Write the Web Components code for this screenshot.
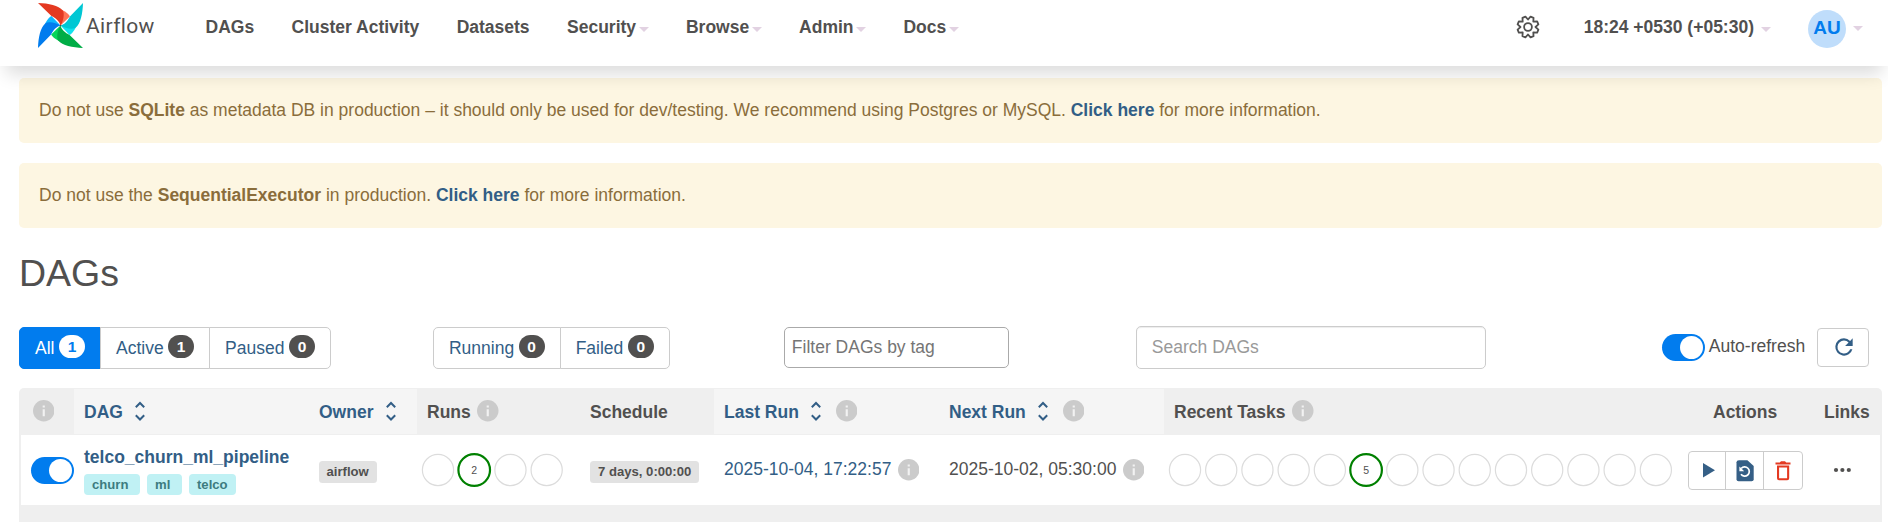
<!DOCTYPE html>
<html lang="en">
<head>
<meta charset="utf-8">
<title>DAGs - Airflow</title>
<style>
html,body{margin:0;padding:0;background:#fff}
body{font:17.5px/25px "Liberation Sans",Arial,sans-serif;color:#51504f;height:522px;overflow:hidden;--link:#325e86}
</style>
</head>
<body>
<airflow-app></airflow-app>
<script>
const define=(name,html)=>customElements.define(name,class extends HTMLElement{
  connectedCallback(){
    if(this.shadowRoot)return;
    const t=document.createElement('template');
    t.innerHTML=typeof html==='function'?html(this):html;
    this.attachShadow({mode:'open'}).append(t.content.cloneNode(true));
  }
});

define('airflow-logo',()=>{
  const blades=[['#e43921','#ff7557',0],['#00c7d4','#11e1ee',90],['#00ad46','#04d659',180],['#017cee','#0cb6ff',270]];
  const light=blades.map(([,l,a])=>`<path transform="rotate(${a})" fill="${l}" d="M5-46C17-40 25-33 28-27L0 0Z"/>`).join('');
  const dark=blades.map(([d,,a])=>`<path transform="rotate(${a})" fill="${d}" d="M-67-67C-35-66-6-60 7-45C13-34 8-12 0 0C-3-12-14-22-27-28Z"/>`).join('');
  return `<style>:host{display:flex;width:118px;height:46px}svg{display:block;flex:none}span{font:400 21px/24px Roboto,sans-serif;margin:10.5px 0 0 3px;white-space:nowrap;letter-spacing:.35px}</style>
  <svg width="45" height="45" viewBox="-67 -67 134 134">${light}${dark}<circle r="2" fill="#51504f"/></svg><span>Airflow</span>`;
});

define('caret-down',`<style>:host{display:block;width:0;height:0;border:5px solid transparent;border-top-color:#e2d2e2;border-bottom:0;margin:4px 0 0 2.5px}</style>`);

define('nav-item',el=>`<style>:host{display:flex;align-items:center;font-weight:700;white-space:nowrap;height:25px}</style><slot></slot>${el.hasAttribute('menu')?'<caret-down></caret-down>':''}`);

define('gear-icon',()=>{
  let p='';
  for(let i=0;i<8;i++){
    const a=(i*45+22.5)*Math.PI/180;
    [[-.3927,7.5],[-.15,10.7],[.15,10.7]].forEach(([o,r],k)=>{
      p+=(i||k?'L':'M')+(Math.sin(a+o)*r).toFixed(2)+' '+(-Math.cos(a+o)*r).toFixed(2);
    });
  }
  return `<style>:host,svg{display:block}</style><svg width="24" height="24" viewBox="-12 -12 24 24" fill="none" stroke="#51504f" stroke-width="1.8" stroke-linejoin="round"><path d="${p}Z"/><circle r="3.9"/></svg>`;
});

define('nav-bar',`<style>
:host{display:flex;box-sizing:border-box;height:66px;background:#fff;box-shadow:0 14px 18px -6px rgba(0,0,0,.14);position:relative;padding:3px 25px 0 38px}
.links{display:flex;gap:37.4px;margin:11.5px 0 0 49.5px;align-items:flex-start}
.right{display:flex;margin-left:auto;align-items:flex-start}
gear-icon{margin:12px 43.5px 0 0}
.time{margin-top:11.5px}
.time caret-down{margin-left:7px}
.user{display:flex;margin-left:37px;align-items:center;height:38px;margin-top:6.5px}
.av{width:38px;height:38px;border-radius:50%;background:#bfddfb;color:#017cee;font:700 19px/36px "Liberation Sans",Arial,sans-serif;text-align:center}
.user caret-down{margin:0 0 0 7px}
</style>
<airflow-logo></airflow-logo>
<div class="links"><nav-item>DAGs</nav-item><nav-item>Cluster Activity</nav-item><nav-item>Datasets</nav-item><nav-item menu>Security</nav-item><nav-item menu>Browse</nav-item><nav-item menu>Admin</nav-item><nav-item menu>Docs</nav-item></div>
<div class="right"><gear-icon></gear-icon><nav-item class="time">18:24 +0530 (+05:30)<caret-down></caret-down></nav-item><div class="user"><div class="av">AU</div><caret-down></caret-down></div></div>`);

define('alert-box',`<style>:host{display:block;box-sizing:border-box;height:65px;padding:20px 20px;margin-bottom:20px;background:#fdf6e2;border-radius:5px;color:#8a6d3b;white-space:nowrap}::slotted(a){font-weight:700;color:var(--link)}</style><slot></slot>`);

define('filter-button',el=>`<style>
:host{display:flex;box-sizing:border-box;height:42px;border:1px solid #ccc;margin-right:-1px;padding:7.5px 15px 0;color:var(--link);background:#fff;white-space:nowrap}
:host([first]){border-radius:5px 0 0 5px}:host([last]){border-radius:0 5px 5px 0;margin-right:0}
:host([active]){background:#017cee;border-color:#017cee;color:#fff}
b{display:block;width:26px;height:23px;border-radius:12px;background:#51504f;color:#fff;font-size:15.5px;line-height:23px;text-align:center;margin:-.5px 0 0 4.5px}
:host([active]) b{background:#fff;color:#017cee}
</style><slot></slot><b>${el.getAttribute('count')}</b>`);

define('toggle-switch',`<style>:host{display:flex;box-sizing:border-box;width:43px;height:27px;border-radius:14px;background:#017cee;padding:2px;justify-content:flex-end;flex:none}i{width:23px;height:23px;border-radius:50%;background:#fff}</style><i></i>`);

define('info-icon',`<style>:host{display:block;flex:none}svg{display:block}</style><svg width="21.5" height="21.5" viewBox="0 0 20 20"><circle cx="10" cy="10" r="10" fill="#cbcbcb"/><path fill="#f2f2f2" d="M9 5h2v2H9zM9 8.5h2V15H9z"/></svg>`);

define('sort-icon',`<style>:host,svg{display:block}</style><svg width="10" height="20" viewBox="0 0 10 20" fill="none" stroke="#325e86" stroke-width="2"><path d="M.8 6.2L5 2l4.2 4.2M.8 14.3L5 18.5l4.2-4.2"/></svg>`);

define('tool-bar',`<style>
:host{display:flex;height:43px;margin-top:32px;align-items:flex-start;padding-right:13px}
.group{display:flex;margin-top:1px}
.g2{margin-left:102px}
.in{box-sizing:border-box;border-radius:5px;background:#fff;white-space:nowrap}
.tag{margin:1px 0 0 114px;width:225px;height:41px;border:1px solid #aaa;padding:7px 7px;color:#757575}
.search{margin-left:127px;width:350px;height:43px;border:1px solid #ccc;padding:8px 15px;color:#999;box-shadow:inset 0 1px 1px rgba(0,0,0,.075)}
.auto{display:flex;margin:8px 0 0 176px;white-space:nowrap}
.auto span{margin:0 0 0 4px}
.btn{box-sizing:border-box;width:52px;height:39px;border:1px solid #ccc;border-radius:4px;margin:2px 0 0 auto;padding:5px 12.5px}
.btn svg{display:block}
</style>
<div class="group"><filter-button first active count="1">All</filter-button><filter-button count="1">Active</filter-button><filter-button last count="0">Paused</filter-button></div>
<div class="group g2"><filter-button first count="0">Running</filter-button><filter-button last count="0">Failed</filter-button></div>
<div class="in tag">Filter DAGs by tag</div>
<div class="in search">Search DAGs</div>
<div class="auto"><toggle-switch></toggle-switch><span>Auto-refresh</span></div>
<div class="btn"><svg width="26" height="26" viewBox="0 0 24 24" fill="#325e86"><path d="M17.65 6.35A7.96 7.96 0 0 0 12 4a8 8 0 1 0 7.73 10h-2.08A6 6 0 1 1 12 6c1.66 0 3.14.69 4.22 1.78L13 11h7V4z"/></svg></div>`);

define('count-rings',el=>{
  const n=+el.getAttribute('total'),at=+el.getAttribute('at'),v=el.getAttribute('value');
  let s='';
  for(let i=0;i<n;i++){const x=17+i*36.22;
    s+=i===at?`<circle cx="${x}" cy="17" r="15.8" stroke="#008000" stroke-width="2.2"/><text x="${x}" y="20.8" text-anchor="middle" fill="#51504f" font-size="10.5" stroke="none">${v}</text>`:`<circle cx="${x}" cy="17" r="15.6" stroke="#dcdcdc" stroke-width="1.2"/>`;}
  return `<style>:host,svg{display:block}svg{overflow:visible}</style><svg width="${34+(n-1)*36.22}" height="34" fill="none">${s}</svg>`;
});

define('text-label',`<style>:host{display:block;box-sizing:border-box;height:22px;padding:0 8px;border-radius:3.5px;background:#e2e2e2;font:700 13.125px/21px "Liberation Sans",Arial,sans-serif;white-space:nowrap}
:host([tag]){background:#c0f1f4;color:#3d7c80;height:21px;line-height:21px;border-radius:4px}</style><slot></slot>`);

define('dag-table',`<style>
:host{display:block;margin-top:19px;background:#efefef;height:134px;border-radius:5px 5px 0 0;overflow:hidden;padding-top:1px}
.r{display:grid;grid-template-columns:55px 235px 108px 163px 134px 225px 225px 514px 136px 68px}
.h{height:45px;font-weight:700}
.h>div{display:flex;align-items:flex-start;padding:10.5px 0 0 10px;white-space:nowrap}
.s{background:#f5f5f5;color:var(--link)}
.h sort-icon{margin:1.5px 0 0 12.5px}
.h info-icon{margin:.5px 0 0 6.5px}
.h sort-icon+info-icon{margin-left:14.5px}
.b{background:#fff;margin:1px 2px 0;height:70px;grid-template-columns:53px 235px 108px 163px 134px 225px 225px 514px 136px 66px;white-space:nowrap}
.b>div{display:flex;align-items:flex-start;padding-left:10px}
.dag{flex-direction:column}
.dag b{color:var(--link);margin-top:9.5px}
.tags{display:flex;gap:7px;margin-top:4.5px}
.date{padding-top:22px!important}
.date info-icon{margin:2px 0 0 6.5px}
.lab{padding-top:26px!important}
.acts{box-sizing:border-box;display:grid;grid-template-columns:37px 38px 38px;width:115px;height:39px;border:1px solid #ccc;border-radius:4px;margin-top:16px}
.acts span{display:flex;align-items:center;justify-content:center;border-right:1px solid #ccc}
.acts span:last-child{border:0}
svg{display:block}
</style>
<div class="r h">
<div style="padding-left:13.5px"><info-icon style="margin-left:0"></info-icon></div>
<div class="s">DAG<sort-icon></sort-icon></div>
<div class="s">Owner<sort-icon></sort-icon></div>
<div>Runs<info-icon></info-icon></div>
<div>Schedule</div>
<div class="s">Last Run<sort-icon></sort-icon><info-icon></info-icon></div>
<div class="s">Next Run<sort-icon></sort-icon><info-icon></info-icon></div>
<div>Recent Tasks<info-icon></info-icon></div>
<div style="padding-left:35px">Actions</div><div>Links</div>
</div>
<div class="r b">
<div><toggle-switch style="margin-top:22px"></toggle-switch></div>
<div class="dag"><b>telco_churn_ml_pipeline</b><div class="tags"><text-label tag style="width:56px">churn</text-label><text-label tag style="width:35px">ml</text-label><text-label tag style="width:47px">telco</text-label></div></div>
<div class="lab"><text-label style="margin-left:-.5px">airflow</text-label></div>
<div style="padding:18px 0 0 3.7px"><count-rings total="4" at="1" value="2"></count-rings></div>
<div class="lab"><text-label>7 days, 0:00:00</text-label></div>
<div class="date" style="color:var(--link)">2025-10-04, 17:22:57<info-icon></info-icon></div>
<div class="date">2025-10-02, 05:30:00<info-icon></info-icon></div>
<div style="padding:18px 0 0 3.7px"><count-rings total="14" at="5" value="5"></count-rings></div>
<div><div class="acts">
<span><svg width="24" height="26" viewBox="0 0 24 26"><path fill="#355f86" d="M8 5l12 7.2L8 19.4z"/></svg></span>
<span><svg width="18" height="22" viewBox="0 0 18 22"><path fill="#355f86" d="M3 .3h8.4L17.7 6v13.3q0 2-2 2H2.5q-2 0-2-2v-17Q.5.3 3 .3z"/><path fill="none" stroke="#fff" stroke-width="1.7" d="M5.2 8.5A4.6 4.6 0 1 1 5 14.3"/><path fill="#fff" d="M3.4 6.4v4.8h4.8z"/></svg></span>
<span><svg width="16" height="20" viewBox="0 0 16 20"><path fill="#e43921" d="M.5 1.5h4.3L6 .2h4l1.2 1.3h4.3v2H.5zM2 4.5h12.2v12.8q0 2-2 2H4q-2 0-2-2zm2.1 2.1v10.6h8V6.6z" fill-rule="evenodd"/></svg></span>
</div></div>
<div style="padding:31px 0 0 19px"><svg width="19" height="8" viewBox="0 0 19 8" fill="#51504f"><circle cx="3" cy="4" r="2.1"/><circle cx="9.4" cy="4" r="2.1"/><circle cx="15.8" cy="4" r="2.1"/></svg></div>
</div>`);

define('airflow-app',`<style>:host{display:block}
main{padding:12px 6px 0 19px}
h1{font-size:37.5px;line-height:42px;font-weight:400;margin:24px 0 0}
</style>
<nav-bar></nav-bar>
<main>
<alert-box>Do not use <b>SQLite</b> as metadata DB in production – it should only be used for dev/testing. We recommend using Postgres or MySQL. <a>Click here</a> for more information.</alert-box>
<alert-box>Do not use the <b>SequentialExecutor</b> in production. <a>Click here</a> for more information.</alert-box>
<h1>DAGs</h1>
<tool-bar></tool-bar>
<dag-table></dag-table>
</main>`);
</script>
</body>
</html>
